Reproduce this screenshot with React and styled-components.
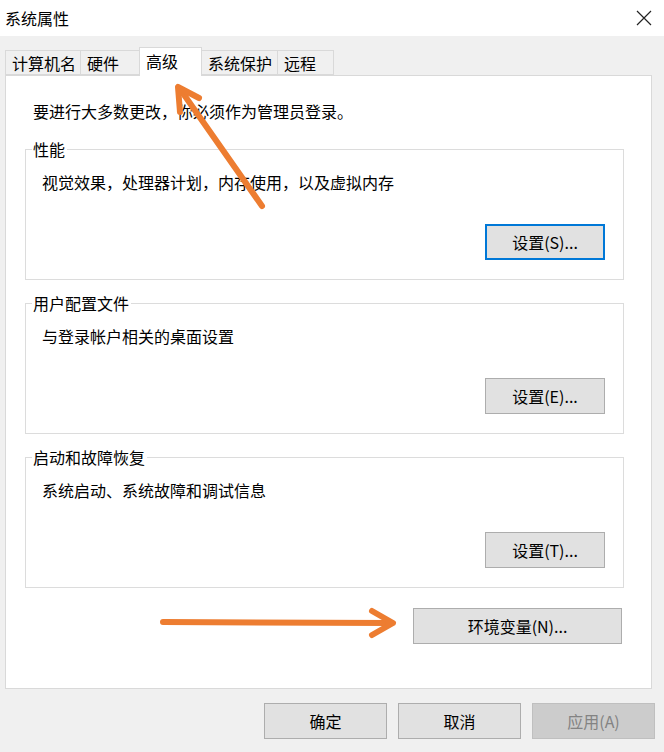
import styled, { createGlobalStyle } from 'styled-components'

const GlobalStyles = createGlobalStyle`
  html, body {
    margin: 0;
    padding: 0;
    background: #ffffff;
  }
  body {
    font-family: "Noto Sans CJK SC", "Liberation Sans", sans-serif;
    color: #000;
  }
`

const Window = styled.div`
  position: relative;
  width: 664px;
  height: 752px;
  display: flex;
  flex-direction: column;
  background: #f0f0f0;
  overflow: hidden;
`

const TitleBar = styled.div`
  height: 36px;
  flex: none;
  background: #ffffff;
  display: flex;
  align-items: center;
  justify-content: space-between;
  padding: 0 12px 0 5px;
  font-size: 16px;
  line-height: 1;
`

const Body = styled.div`
  flex: 1;
  display: flex;
  flex-direction: column;
  padding: 11px 12px 0 5px;
`

const TabRow = styled.div`
  display: flex;
  align-items: flex-end;
  height: 28px;
`

const Tab = styled.div`
  width: ${p => p.$w}px;
  height: ${p => (p.$active ? '29px' : '25px')};
  margin-bottom: ${p => (p.$active ? '-1px' : '0')};
  padding: ${p => (p.$active ? '2px' : '0')} 0 0 6px;
  display: flex;
  align-items: ${p => (p.$active ? 'flex-start' : 'center')};
  box-sizing: border-box;
  background: ${p => (p.$active ? '#ffffff' : '#f0f0f0')};
  border: 1px solid #d9d9d9;
  border-bottom: ${p => (p.$active ? 'none' : '1px solid #d9d9d9')};
  margin-right: -1px;
  font-size: 16px;
  line-height: 22px;
  position: relative;
  z-index: ${p => (p.$active ? 2 : 1)};
`

const Panel = styled.div`
  height: 614px;
  box-sizing: border-box;
  background: #ffffff;
  border: 1px solid #d9d9d9;
  padding: 24px 27px 0 19px;
  display: flex;
  flex-direction: column;
`

const Notice = styled.div`
  font-size: 16px;
  line-height: 22px;
  padding-left: 8px;
  margin-bottom: 27px;
`

const Groups = styled.div`
  display: flex;
  flex-direction: column;
  gap: 23px;
`

const Group = styled.div`
  position: relative;
  height: 131px;
  box-sizing: border-box;
  border: 1px solid #dcdcdc;
  padding: 21px 18px 19px 16px;
  display: flex;
  flex-direction: column;
`

const Legend = styled.span`
  position: absolute;
  top: -12px;
  left: 6px;
  padding: 0 2px 0 1px;
  background: #ffffff;
  font-size: 16px;
  line-height: 22px;
`

const Desc = styled.div`
  font-size: 16px;
  line-height: 22px;
`

const Button = styled.button`
  width: ${p => p.$w || 123}px;
  height: 36px;
  box-sizing: border-box;
  font-family: "Noto Sans CJK SC", "Liberation Sans", sans-serif;
  font-size: 16px;
  color: ${p => (p.$disabled ? '#838383' : '#000')};
  background: ${p => (p.$disabled ? '#cccccc' : '#e1e1e1')};
  border: ${p => (p.$focus ? '2px solid #0078d7' : p.$disabled ? '1px solid #bfbfbf' : '1px solid #adadad')};
  padding: 0;
  line-height: 1;
`

const GroupButton = styled(Button)`
  align-self: flex-end;
  margin-top: auto;
  width: 120px;
`

const EnvRow = styled.div`
  display: flex;
  justify-content: flex-end;
  padding-right: 2px;
  margin-top: 20px;
`

const Footer = styled.div`
  display: flex;
  justify-content: flex-end;
  gap: 11px;
  margin-top: 14px;
  margin-right: -3px;
`

const Overlay = styled.svg`
  position: absolute;
  left: 0;
  top: 0;
  pointer-events: none;
`

const tabs = [
  { label: '计算机名', w: 76 },
  { label: '硬件', w: 60 },
  { label: '高级', w: 63, active: true },
  { label: '系统保护', w: 77 },
  { label: '远程', w: 57 },
]

const groups = [
  { title: '性能', desc: '视觉效果，处理器计划，内存使用，以及虚拟内存', btn: '设置(S)...', focus: true },
  { title: '用户配置文件', desc: '与登录帐户相关的桌面设置', btn: '设置(E)...' },
  { title: '启动和故障恢复', desc: '系统启动、系统故障和调试信息', btn: '设置(T)...' },
]

const App = () => {
  return (
    <Window>
      <GlobalStyles />
      <TitleBar>
        <span>系统属性</span>
        <svg width="16" height="16" viewBox="0 0 16 16">
          <path d="M1 1 L15 15 M15 1 L1 15" stroke="#222" strokeWidth="1.2" fill="none" />
        </svg>
      </TitleBar>
      <Body>
        <TabRow>
          {tabs.map(t => (
            <Tab key={t.label} $w={t.w} $active={t.active}>{t.label}</Tab>
          ))}
        </TabRow>
        <Panel>
          <Notice>要进行大多数更改，你必须作为管理员登录。</Notice>
          <Groups>
            {groups.map(g => (
              <Group key={g.title}>
                <Legend>{g.title}</Legend>
                <Desc>{g.desc}</Desc>
                <GroupButton $focus={g.focus}>{g.btn}</GroupButton>
              </Group>
            ))}
          </Groups>
          <EnvRow>
            <Button $w={209}>环境变量(N)...</Button>
          </EnvRow>
        </Panel>
        <Footer>
          <Button>确定</Button>
          <Button>取消</Button>
          <Button $disabled>应用(A)</Button>
        </Footer>
      </Body>
      <Overlay width="664" height="752" viewBox="0 0 664 752">
        <g stroke="#ed7d31" strokeWidth="6" strokeLinecap="round" strokeLinejoin="round" fill="none">
          <path d="M262 206 L180 89" />
          <path d="M199 98 L178 87 L180 112" />
          <path d="M163 622 L391 623" />
          <path d="M372 611 L393 623 L372 635" />
        </g>
      </Overlay>
    </Window>
  )
}

export default App
